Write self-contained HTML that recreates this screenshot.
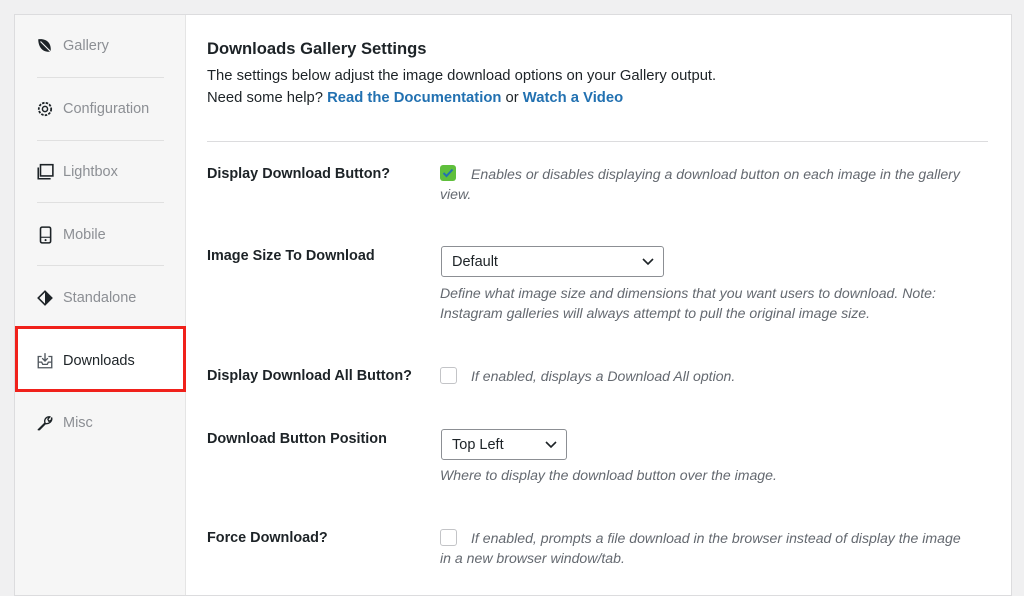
<!DOCTYPE html>
<html><head><style>
body{margin:0;width:1024px;height:579px;background:#f0f0f1;font-family:"Liberation Sans",sans-serif;position:relative;overflow:hidden;color:#1d2327}
.panel{position:absolute;left:14px;top:14px;width:996px;height:580px;background:#fff;border:1px solid #dcdcde}
.side{position:absolute;left:0;top:0;width:170px;height:100%;background:#f6f6f6;border-right:1px solid #e5e5e5}
.it{position:absolute;left:21px;font-size:14.5px;color:#8c8f94;height:20px;line-height:20px}
.it svg{position:absolute;left:0;top:1px}
.it span{position:absolute;left:27px;white-space:nowrap}
.sep{position:absolute;left:22px;width:127px;height:1px;background:#e0e0e0}
.red{position:absolute;left:0;top:311px;width:165px;height:60px;background:#fff;border:3px solid #f0211b}
.abs{position:absolute;white-space:nowrap}
.lab{font-weight:bold;font-size:14.4px;left:207px}
.desc{font-style:italic;font-size:14.1px;color:#646970}
a{color:#2271b1;font-weight:bold;text-decoration:none}
.sel{position:absolute;border:1px solid #8c8f94;border-radius:3px;background:#fff;font-size:14.5px;height:31px;line-height:30px;padding-left:10px;box-sizing:border-box}
.cb{position:absolute;width:15px;height:15px;border:1px solid #c3c4c7;border-radius:3px;background:#fff}
</style></head><body>
<div class="panel"><div class="side">
<div class="red"></div>
<div class="it" style="top:21px"><svg width="18" height="18" viewBox="0 0 16 16"><path d="M2 2C9 1 14 5 13 13C6 14 2 9 2 2Z" fill="#1d2327"/><path d="M4 4L15 15" stroke="#f6f6f6" stroke-width="1"/></svg><span>Gallery</span></div>
<div class="sep" style="top:62px"></div>
<div class="it" style="top:84px"><svg width="18" height="18" viewBox="0 0 16 16"><circle cx="8" cy="8" r="5.5" fill="none" stroke="#1d2327" stroke-width="1.6" stroke-dasharray="2.2 1.1"/><circle cx="8" cy="8" r="2.3" fill="none" stroke="#1d2327" stroke-width="1.3"/></svg><span>Configuration</span></div>
<div class="sep" style="top:125px"></div>
<div class="it" style="top:147px"><svg width="18" height="18" viewBox="0 0 16 16"><rect x="4" y="1.5" width="11" height="10" fill="none" stroke="#1d2327" stroke-width="1.4"/><path d="M2 4V14H13" fill="none" stroke="#1d2327" stroke-width="1.4"/></svg><span>Lightbox</span></div>
<div class="sep" style="top:187px"></div>
<div class="it" style="top:210px"><svg width="18" height="18" viewBox="0 0 16 16"><rect x="4" y="1" width="9" height="14" rx="1.5" fill="none" stroke="#1d2327" stroke-width="1.4"/><path d="M4 10H13" stroke="#1d2327"/><circle cx="8.5" cy="12.5" r=".9" fill="#1d2327"/></svg><span>Mobile</span></div>
<div class="sep" style="top:250px"></div>
<div class="it" style="top:273px"><svg width="18" height="18" viewBox="0 0 16 16"><path d="M8 1L15 8L8 15L1 8Z" fill="#1d2327"/><path d="M8 3L8 13L3 8Z" fill="#f6f6f6"/></svg><span>Standalone</span></div>
<div class="it" style="top:336px;color:#1d2327"><svg width="18" height="18" viewBox="0 0 16 16"><path d="M5 4H2V14H14V4H11M2 9H5L6 11H10L11 9H14M8 1V8M5.5 5.5L8 8L10.5 5.5" fill="none" stroke="#50575e" stroke-width="1.2"/></svg><span>Downloads</span></div>
<div class="it" style="top:398px"><svg width="18" height="18" viewBox="0 0 16 16"><path d="M2 14L8 8C7 5 9 2 12.5 2.5L10.5 4.5L11.5 6.5L13.5 5.5L14 3.5C14.5 7 11 9 8.5 8.5L3 14Z" fill="none" stroke="#1d2327" stroke-width="1.2" stroke-linejoin="round"/></svg><span>Misc</span></div>
</div></div>
<div class="abs" style="left:207px;top:39px;font-size:16.6px;font-weight:bold">Downloads Gallery Settings</div>
<div class="abs" style="left:207px;top:68px;font-size:14.8px">The settings below adjust the image download options on your Gallery output.</div>
<div class="abs" style="left:207px;top:90px;font-size:14.8px">Need some help? <a>Read the Documentation</a> or <a>Watch a Video</a></div>
<div class="abs" style="left:207px;top:141px;width:781px;height:1px;background:#dcdcde"></div>
<div class="abs lab" style="top:166px">Display Download Button?</div>
<div class="abs" style="left:440px;top:165px;width:16px;height:16px;background:#5fbf3c;border-radius:3px"><svg width="16" height="16"><path d="M3.5 8L6.5 11L12.5 4.5" fill="none" stroke="#2271b1" stroke-width="2"/></svg></div>
<div class="abs desc" style="left:471px;top:166px">Enables or disables displaying a download button on each image in the gallery</div>
<div class="abs desc" style="left:440px;top:186px">view.</div>
<div class="abs lab" style="top:248px">Image Size To Download</div>
<div class="sel" style="left:441px;top:246px;width:223px">Default<svg style="position:absolute;right:9px;top:11px" width="12" height="8"><path d="M1 1L6 6L11 1" fill="none" stroke="#1d2327" stroke-width="1.6"/></svg></div>
<div class="abs desc" style="left:440px;top:285px">Define what image size and dimensions that you want users to download. Note:</div>
<div class="abs desc" style="left:440px;top:305px">Instagram galleries will always attempt to pull the original image size.</div>
<div class="abs lab" style="top:368px">Display Download All Button?</div>
<div class="cb" style="left:440px;top:367px"></div>
<div class="abs desc" style="left:471px;top:368px">If enabled, displays a Download All option.</div>
<div class="abs lab" style="top:431px">Download Button Position</div>
<div class="sel" style="left:441px;top:429px;width:126px">Top Left<svg style="position:absolute;right:9px;top:11px" width="12" height="8"><path d="M1 1L6 6L11 1" fill="none" stroke="#1d2327" stroke-width="1.6"/></svg></div>
<div class="abs desc" style="left:440px;top:467px">Where to display the download button over the image.</div>
<div class="abs lab" style="top:530px">Force Download?</div>
<div class="cb" style="left:440px;top:529px"></div>
<div class="abs desc" style="left:471px;top:530px">If enabled, prompts a file download in the browser instead of display the image</div>
<div class="abs desc" style="left:440px;top:550px">in a new browser window/tab.</div>
</body></html>
